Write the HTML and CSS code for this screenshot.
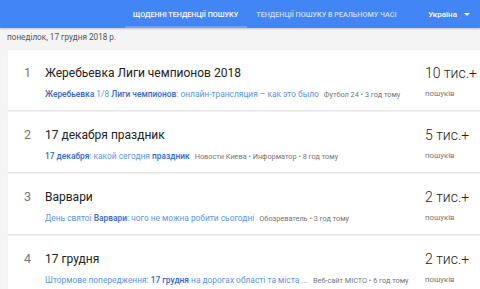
FILE: index.html
```html
<!DOCTYPE html>
<html lang="uk">
<head>
<meta charset="UTF-8">
<meta name="viewport" content="width=device-width, initial-scale=1.0">
<title>Тенденції пошуку</title>
<link rel="stylesheet" href="styles.css">
</head>
<body>
  <div class="topbar">
    <a class="tab active">Щоденні тенденції пошуку</a>
    <a class="tab">Тенденції пошуку в реальному часі</a>
    <div class="country">Україна <span class="caret"></span></div>
  </div>

  <div class="date">понеділок, 17 грудня 2018 р.</div>

  <div class="list">
    <div class="item">
      <div class="num">1</div>
      <div class="main">
        <div class="title">Жеребьевка Лиги чемпионов 2018</div>
        <div class="sub"><b>Жеребьевка</b> 1/8 <b>Лиги чемпионов</b>: онлайн-трансляция – как это было <span class="src">Футбол 24 • 3 год тому</span></div>
      </div>
      <div class="count">
        <div class="big">10 тис.+</div>
        <div class="small">пошуків</div>
      </div>
    </div>

    <div class="item">
      <div class="num">2</div>
      <div class="main">
        <div class="title">17 декабря праздник</div>
        <div class="sub"><b>17 декабря</b>: какой сегодня <b>праздник</b> <span class="src">Новости Киева • Информатор • 8 год тому</span></div>
      </div>
      <div class="count">
        <div class="big">5 тис.+</div>
        <div class="small">пошуків</div>
      </div>
    </div>

    <div class="item">
      <div class="num">3</div>
      <div class="main">
        <div class="title">Варвари</div>
        <div class="sub">День святої <b>Варвари</b>: чого не можна робити сьогодні <span class="src">Обозреватель • 3 год тому</span></div>
      </div>
      <div class="count">
        <div class="big">2 тис.+</div>
        <div class="small">пошуків</div>
      </div>
    </div>

    <div class="item">
      <div class="num">4</div>
      <div class="main">
        <div class="title">17 грудня</div>
        <div class="sub">Штормове попередження: <b>17 грудня</b> на дорогах області та міста ... <span class="src">Веб-сайт МІСТО • 6 год тому</span></div>
      </div>
      <div class="count">
        <div class="big">2 тис.+</div>
        <div class="small">пошуків</div>
      </div>
    </div>
  </div>
</body>
</html>
```

FILE: styles.css
```css
body {
  margin: 0;
  background-color: #f4f4f4;
  font-family: Roboto, "Noto Sans", Arial, sans-serif;
  color: #212121;
  overflow: hidden;
}

/* blue header with tabs */
.topbar {
  display: flex;
  align-items: stretch;
  height: 28px;
  padding-left: 125px;
  background-color: #4285f4;
  box-shadow: 0 1px 2px rgba(0, 0, 0, 0.2);
}

.tab {
  display: flex;
  align-items: center;
  padding: 0 9px;
  font-size: 7.2px;
  font-weight: 500;
  text-transform: uppercase;
  white-space: nowrap;
  color: rgba(255, 255, 255, 0.75);
  box-sizing: border-box;
}

.tab.active {
  padding-left: 8px;
  padding-top: 2px;
  color: #fff;
  border-bottom: 2px solid #6fa3f7;
}

.country {
  display: flex;
  align-items: center;
  margin-left: auto;
  padding-right: 10px;
  font-size: 8px;
  font-weight: 500;
  color: #fff;
}

.caret {
  margin-left: 7px;
  border-left: 3px solid transparent;
  border-right: 3px solid transparent;
  border-top: 3px solid #fff;
}

.date {
  padding: 4px 0 0 7px;
  height: 18px;
  font-size: 8.2px;
  color: #555;
}

/* list of trends */
.list {
  margin-left: 8px;
}

.item {
  display: flex;
  height: 60px;
  margin-bottom: 2px;
  background-color: #fff;
  box-shadow: 0 1px 1px rgba(0, 0, 0, 0.06);
}

.num {
  width: 37px;
  padding: 14px 0 0 16px;
  box-sizing: border-box;
  font-size: 12.5px;
  line-height: 18px;
  color: #757575;
}

.main {
  flex: 1;
  padding-top: 14px;
  min-width: 0;
}

.title {
  font-size: 12px;
  line-height: 18px;
  color: #212121;
}

.sub {
  margin-top: 7px;
  font-size: 8.4px;
  line-height: 10px;
  color: #5b95e6;
  white-space: nowrap;
  overflow: hidden;
}

.sub b {
  font-weight: 500;
  color: #3468c8;
}

.src {
  margin-left: 3px;
  font-size: 7.3px;
  color: #757575;
}

.count {
  width: 55px;
  padding-top: 14px;
  white-space: nowrap;
}

.big {
  font-size: 14px;
  font-weight: 300;
  line-height: 18px;
  color: #222;
}

.small {
  margin-top: 7px;
  font-size: 7.8px;
  line-height: 10px;
  color: #757575;
}
```
